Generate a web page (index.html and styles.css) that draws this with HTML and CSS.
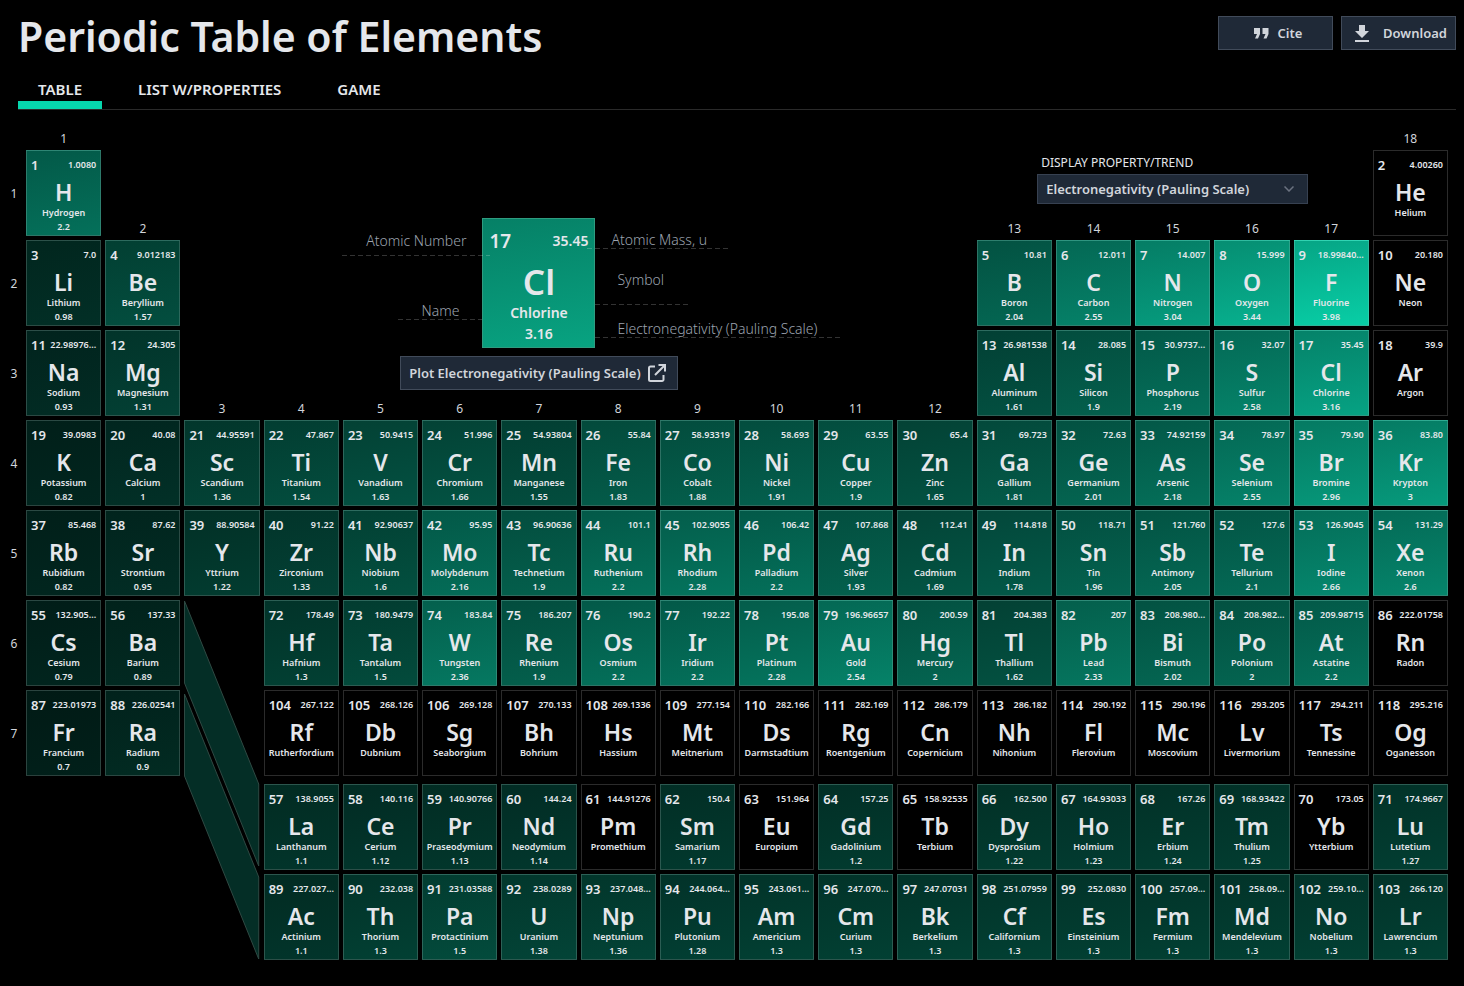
FILE: index.html
```html
<!DOCTYPE html>
<html lang="en">
<head>
<meta charset="utf-8">
<meta name="viewport" content="width=device-width, initial-scale=1">
<title>Periodic Table of Elements</title>
<link rel="stylesheet" href="styles.css">
</head>
<body>
<header class="page-header">
  <h1 class="page-title">Periodic Table of Elements</h1>
  <div class="actions">
    <button type="button" class="btn btn-action">
      <svg class="icon-quote" viewBox="0 0 15 11" aria-hidden="true"><path d="M0 0h6v6L4 10.500H1L3 6H0zM8.500 0h6v6l-2 4.500h-3l2-4.500h-3z"/></svg>
      Cite
    </button>
    <button type="button" class="btn btn-action btn-download">
      <svg class="icon-download" viewBox="0 0 14 17" aria-hidden="true"><path d="M4 0h6v6h4l-7 7-7-7h4zM0 15h14v2H0z"/></svg>
      Download
    </button>
  </div>
</header>
<nav class="tabs" aria-label="Views">
  <a class="tab tab-active" href="#table" aria-current="page">TABLE</a>
  <a class="tab" href="#list">LIST W/PROPERTIES</a>
  <a class="tab" href="#game">GAME</a>
</nav>
<main class="periodic" id="table">
  <section class="legend" aria-label="Legend">
    <div class="legend-row">
      <div class="legend-side legend-left">
        <span class="note note-number">Atomic Number</span>
        <span class="note note-name">Name</span>
      </div>
      <div class="sample">
        <div class="sample-top"><span class="sample-number">17</span><span class="sample-mass">35.45</span></div>
        <span class="sample-symbol">Cl</span>
        <span class="sample-text">Chlorine</span>
        <span class="sample-text">3.16</span>
      </div>
      <div class="legend-side legend-right">
        <span class="note note-mass">Atomic Mass, u</span>
        <span class="note note-symbol">Symbol</span>
        <span class="note note-value">Electronegativity (Pauling Scale)</span>
      </div>
    </div>
    <button type="button" class="btn btn-plot">
      Plot Electronegativity (Pauling Scale)
      <svg class="icon-external" viewBox="0 0 18 18" aria-hidden="true"><path d="M7 2.500H2.500a1.500 1.500 0 0 0-1.500 1.500v11.500A1.500 1.500 0 0 0 2.500 17H14a1.500 1.500 0 0 0 1.500-1.500V11M10.500 1H17v6.500M17 1 7 11"/></svg>
    </button>
  </section>
  <div class="property">
    <label class="property-label" for="property">DISPLAY PROPERTY/TREND</label>
    <div class="select-wrap">
      <select class="select" id="property"><option>Electronegativity (Pauling Scale)</option></select>
      <svg class="icon-chevron" viewBox="0 0 10 6" aria-hidden="true"><path d="M.5.500 5 5 9.500.500"/></svg>
    </div>
  </div>
  <svg class="connector" viewBox="0 0 76 360" preserveAspectRatio="none" aria-hidden="true"><path d="M.5 1 75.500 184v82L.5 83zM.5 94 75.500 277v82L.5 176z"/></svg>
</main>
<script src="table.js"></script>
</body>
</html>
```
FILE: styles.css
```css
* { box-sizing: border-box; }

body {
  margin: 0;
  background: #000;
  color: #e5e7eb;
  font-family: "Segoe UI", "Noto Sans", "Open Sans", sans-serif;
  font-size: 14px;
  line-height: 20px;
}

a { color: inherit; text-decoration: none; }

.page-header {
  display: flex;
  justify-content: space-between;
  align-items: flex-start;
  padding: 8px 8px 0 18px;
}

.page-title {
  margin: 0;
  font-size: 41px;
  line-height: 56px;
  font-weight: 600;
}

.actions { display: flex; gap: 8px; padding-top: 8px; }

.btn {
  display: flex;
  align-items: center;
  justify-content: center;
  height: 34px;
  background: #1f2937;
  border: 1px solid #414b5a;
  color: #d1d5db;
  font: inherit;
  font-size: 13px;
  font-weight: 600;
  white-space: nowrap;
}

.btn-action { width: 115px; gap: 9px; padding: 0 8px 0 13px; }
.btn-download { gap: 14px; }
.btn-plot { gap: 7px; padding: 0 11px 0 8px; }

.icon-quote { width: 15px; height: 11px; fill: currentColor; }
.icon-download { width: 14px; height: 17px; fill: currentColor; flex: none; }
.icon-external { width: 18px; height: 18px; fill: none; stroke: currentColor; stroke-width: 2; }

.tabs {
  display: flex;
  gap: 16px;
  margin: 13px 8px 0 18px;
  border-bottom: 1px solid #2a2a2a;
}

.tab {
  padding: 2px 20px;
  border-bottom: 8px solid transparent;
  font-size: 15px;
  font-weight: 600;
}

.tab-active { border-bottom-color: #06d6ad; }

.periodic {
  display: grid;
  grid-template-columns: 16px repeat(18, minmax(0, 1fr));
  grid-template-rows: 16px repeat(7, minmax(86px, auto)) 0 repeat(2, minmax(86px, auto));
  gap: 4px;
  padding: 20px 16px 26px 6px;
}

.group, .period {
  font-size: 12px;
  line-height: 14px;
  text-align: center;
  color: #d1d5db;
}

.group { align-self: end; }
.period { align-self: center; padding-top: 2px; }

.element {
  display: flex;
  flex-direction: column;
  min-width: 0;
  padding: 4px 4px 0;
  border: 1px solid rgba(255, 255, 255, .17);
  text-align: center;
  font-weight: 600;
  white-space: nowrap;
}

.element-top {
  display: flex;
  justify-content: space-between;
  align-items: center;
  height: 20px;
}

.element-number { font-size: 13px; }
.element-mass { font-size: 9px; }
.element-symbol { font-size: 23px; line-height: 34px; }
.element-name { font-size: 9px; line-height: 14px; margin: -3px -4px 0; }
.element-value { font-size: 9px; line-height: 14px; }

.connector {
  grid-area: 7 / 4 / 12 / 5;
  width: 100%;
  height: 100%;
  fill: #042e26;
  stroke: #2f4a44;
}

.legend {
  grid-area: 2 / 4 / 5 / 13;
  display: flex;
  flex-direction: column;
  align-items: center;
  gap: 8px;
  padding-top: 68px;
}

.legend-row {
  display: grid;
  grid-template-columns: 1fr 113px 1fr;
  align-self: stretch;
}

.legend-side {
  display: flex;
  flex-direction: column;
  color: #9ca3af;
  font-weight: 300;
  z-index: 1;
}

.legend-left { align-items: flex-end; }
.legend-right { align-items: flex-start; }

.note {
  background: repeating-linear-gradient(90deg, rgba(255, 255, 255, .2) 0 5px, transparent 5px 8px) left bottom / 100% 1px no-repeat;
}

.note-number { margin: 13px -8px 0 0; padding: 0 24px 5px 24px; }
.note-name { margin-top: 46px; padding: 0 23px 0 23px; line-height: 18px; }
.note-mass { margin: 13px 0 0 -8px; padding: 0 24px 0 24px; line-height: 18px; }
.note-symbol { margin-top: 21px; padding: 0 24px 15px 22px; }
.note-value { margin-top: 15px; padding: 0 24px 0 22px; line-height: 18px; }

.sample {
  display: flex;
  flex-direction: column;
  height: 130px;
  padding: 12px 6px 0;
  border: 1px solid #2f9c80;
  background: linear-gradient(170deg, #068066, #08a381);
  text-align: center;
  font-weight: 600;
}

.sample-top { display: flex; justify-content: space-between; align-items: center; }
.sample-number { font-size: 19px; }
.sample-mass { font-size: 14px; }
.sample-symbol { font-size: 35px; line-height: 46px; margin-top: 8px; }
.sample-text { font-size: 14px; line-height: 21px; }
.sample-symbol + .sample-text { margin-top: -3px; }

.property {
  grid-area: 2 / 14 / 3 / 19;
  justify-self: center;
  padding-top: 3px;
}

.property-label {
  display: block;
  padding-left: 4px;
  font-size: 12px;
  line-height: 20px;
  margin-bottom: 1px;
}

.select-wrap { position: relative; width: 271px; }

.select {
  width: 100%;
  height: 30px;
  padding: 0 28px 0 8px;
  appearance: none;
  background: #1f2937;
  border: 1px solid #374151;
  border-radius: 0;
  color: #d1d5db;
  font: inherit;
  font-size: 13px;
  font-weight: 600;
}

.icon-chevron {
  position: absolute;
  right: 14px;
  top: 12px;
  width: 10px;
  height: 6px;
  fill: none;
  stroke: #6b7280;
  stroke-width: 1.500;
  pointer-events: none;
}
```
FILE: table.js
```js
// Rows of the table: [grid row, first column, "number symbol name mass value" ...]
const blocks = [
  [1, 1, ["1 H Hydrogen 1.0080 2.2"]],
  [1, 18, ["2 He Helium 4.00260"]],
  [2, 1, ["3 Li Lithium 7.0 0.98", "4 Be Beryllium 9.012183 1.57"]],
  [2, 13, ["5 B Boron 10.81 2.04", "6 C Carbon 12.011 2.55", "7 N Nitrogen 14.007 3.04", "8 O Oxygen 15.999 3.44", "9 F Fluorine 18.99840... 3.98", "10 Ne Neon 20.180"]],
  [3, 1, ["11 Na Sodium 22.98976... 0.93", "12 Mg Magnesium 24.305 1.31"]],
  [3, 13, ["13 Al Aluminum 26.981538 1.61", "14 Si Silicon 28.085 1.9", "15 P Phosphorus 30.9737... 2.19", "16 S Sulfur 32.07 2.58", "17 Cl Chlorine 35.45 3.16", "18 Ar Argon 39.9"]],
  [4, 1, ["19 K Potassium 39.0983 0.82", "20 Ca Calcium 40.08 1", "21 Sc Scandium 44.95591 1.36", "22 Ti Titanium 47.867 1.54", "23 V Vanadium 50.9415 1.63", "24 Cr Chromium 51.996 1.66", "25 Mn Manganese 54.93804 1.55", "26 Fe Iron 55.84 1.83", "27 Co Cobalt 58.93319 1.88", "28 Ni Nickel 58.693 1.91", "29 Cu Copper 63.55 1.9", "30 Zn Zinc 65.4 1.65", "31 Ga Gallium 69.723 1.81", "32 Ge Germanium 72.63 2.01", "33 As Arsenic 74.92159 2.18", "34 Se Selenium 78.97 2.55", "35 Br Bromine 79.90 2.96", "36 Kr Krypton 83.80 3"]],
  [5, 1, ["37 Rb Rubidium 85.468 0.82", "38 Sr Strontium 87.62 0.95", "39 Y Yttrium 88.90584 1.22", "40 Zr Zirconium 91.22 1.33", "41 Nb Niobium 92.90637 1.6", "42 Mo Molybdenum 95.95 2.16", "43 Tc Technetium 96.90636 1.9", "44 Ru Ruthenium 101.1 2.2", "45 Rh Rhodium 102.9055 2.28", "46 Pd Palladium 106.42 2.2", "47 Ag Silver 107.868 1.93", "48 Cd Cadmium 112.41 1.69", "49 In Indium 114.818 1.78", "50 Sn Tin 118.71 1.96", "51 Sb Antimony 121.760 2.05", "52 Te Tellurium 127.6 2.1", "53 I Iodine 126.9045 2.66", "54 Xe Xenon 131.29 2.6"]],
  [6, 1, ["55 Cs Cesium 132.905... 0.79", "56 Ba Barium 137.33 0.89"]],
  [6, 4, ["72 Hf Hafnium 178.49 1.3", "73 Ta Tantalum 180.9479 1.5", "74 W Tungsten 183.84 2.36", "75 Re Rhenium 186.207 1.9", "76 Os Osmium 190.2 2.2", "77 Ir Iridium 192.22 2.2", "78 Pt Platinum 195.08 2.28", "79 Au Gold 196.96657 2.54", "80 Hg Mercury 200.59 2", "81 Tl Thallium 204.383 1.62", "82 Pb Lead 207 2.33", "83 Bi Bismuth 208.980... 2.02", "84 Po Polonium 208.982... 2", "85 At Astatine 209.98715 2.2", "86 Rn Radon 222.01758"]],
  [7, 1, ["87 Fr Francium 223.01973 0.7", "88 Ra Radium 226.02541 0.9"]],
  [7, 4, ["104 Rf Rutherfordium 267.122", "105 Db Dubnium 268.126", "106 Sg Seaborgium 269.128", "107 Bh Bohrium 270.133", "108 Hs Hassium 269.1336", "109 Mt Meitnerium 277.154", "110 Ds Darmstadtium 282.166", "111 Rg Roentgenium 282.169", "112 Cn Copernicium 286.179", "113 Nh Nihonium 286.182", "114 Fl Flerovium 290.192", "115 Mc Moscovium 290.196", "116 Lv Livermorium 293.205", "117 Ts Tennessine 294.211", "118 Og Oganesson 295.216"]],
  [9, 4, ["57 La Lanthanum 138.9055 1.1", "58 Ce Cerium 140.116 1.12", "59 Pr Praseodymium 140.90766 1.13", "60 Nd Neodymium 144.24 1.14", "61 Pm Promethium 144.91276", "62 Sm Samarium 150.4 1.17", "63 Eu Europium 151.964", "64 Gd Gadolinium 157.25 1.2", "65 Tb Terbium 158.92535", "66 Dy Dysprosium 162.500 1.22", "67 Ho Holmium 164.93033 1.23", "68 Er Erbium 167.26 1.24", "69 Tm Thulium 168.93422 1.25", "70 Yb Ytterbium 173.05", "71 Lu Lutetium 174.9667 1.27"]],
  [10, 4, ["89 Ac Actinium 227.027... 1.1", "90 Th Thorium 232.038 1.3", "91 Pa Protactinium 231.03588 1.5", "92 U Uranium 238.0289 1.38", "93 Np Neptunium 237.048... 1.36", "94 Pu Plutonium 244.064... 1.28", "95 Am Americium 243.061... 1.3", "96 Cm Curium 247.070... 1.3", "97 Bk Berkelium 247.07031 1.3", "98 Cf Californium 251.07959 1.3", "99 Es Einsteinium 252.0830 1.3", "100 Fm Fermium 257.09... 1.3", "101 Md Mendelevium 258.09... 1.3", "102 No Nobelium 259.10... 1.3", "103 Lr Lawrencium 266.120 1.3"]]
];

// Period in which each group's label sits, just above its first element
const groupTop = [0, 1, 3, 3, 3, 3, 3, 3, 3, 3, 3, 3, 1, 1, 1, 1, 1, 0];

const table = document.querySelector(".periodic");

function add(parent, tag, className, text) {
  const node = document.createElement(tag);
  node.className = className;
  if (text !== undefined) node.textContent = text;
  parent.append(node);
  return node;
}

function shade(value) {
  const level = Math.max(0, (value * 53 - 5) / 206);
  const mix = k => `rgb(${[8, 206, 166].map(c => Math.round(c * level * k)).join(",")})`;
  return `linear-gradient(170deg, ${mix(0.8)}, ${mix(1)})`;
}

groupTop.forEach((row, i) => {
  add(table, "span", "group", i + 1).style.gridArea = `${row + 1} / ${i + 2}`;
});

for (let period = 1; period <= 7; period++) {
  add(table, "span", "period", period).style.gridArea = `${period + 1} / 1`;
}

for (const [row, column, elements] of blocks) {
  elements.forEach((entry, i) => {
    const [number, symbol, name, mass, value] = entry.split(" ");
    const cell = add(table, "a", "element");
    cell.href = "#" + name;
    cell.style.gridArea = `${row + 1} / ${column + i + 1}`;
    if (value) cell.style.background = shade(Number(value));
    const top = add(cell, "span", "element-top");
    add(top, "span", "element-number", number);
    add(top, "span", "element-mass", mass);
    add(cell, "span", "element-symbol", symbol);
    add(cell, "span", "element-name", name);
    if (value) add(cell, "span", "element-value", value);
  });
}
```
